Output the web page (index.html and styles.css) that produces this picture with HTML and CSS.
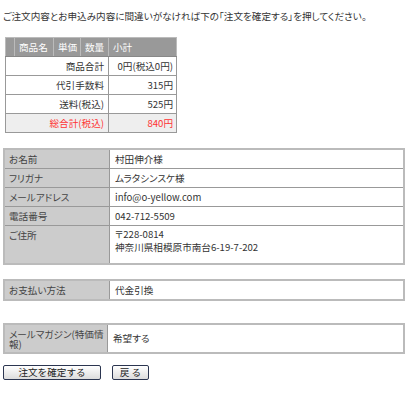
FILE: index.html
```html
<!DOCTYPE html>
<html lang="ja">
<head>
    <meta charset="UTF-8">
    <title>注文内容の確認</title>
    <link rel="stylesheet" href="styles.css">
</head>
<body>
    <div class="confirm-page">
        <p class="lead">ご注文内容とお申込み内容に間違いがなければ下の「注文を確定する」を押してください。</p>

        <table class="cart-table">
            <tr class="cart-head">
                <th class="col-mark"></th>
                <th class="col-name">商品名</th>
                <th class="col-price">単価</th>
                <th class="col-qty">数量</th>
                <th class="col-sub">小計</th>
            </tr>
            <tr>
                <td colspan="4" class="sum-label">商品合計</td>
                <td class="sum-value">0円(税込0円)</td>
            </tr>
            <tr>
                <td colspan="4" class="sum-label">代引手数料</td>
                <td class="sum-value">315円</td>
            </tr>
            <tr>
                <td colspan="4" class="sum-label">送料(税込)</td>
                <td class="sum-value">525円</td>
            </tr>
            <tr class="grand-total">
                <td colspan="4" class="sum-label">総合計(税込)</td>
                <td class="sum-value">840円</td>
            </tr>
        </table>

        <table class="info-table customer">
            <tr>
                <th>お名前</th>
                <td>村田伸介様</td>
            </tr>
            <tr>
                <th>フリガナ</th>
                <td>ムラタシンスケ様</td>
            </tr>
            <tr>
                <th>メールアドレス</th>
                <td>info@o-yellow.com</td>
            </tr>
            <tr>
                <th>電話番号</th>
                <td>042-712-5509</td>
            </tr>
            <tr class="address-row">
                <th>ご住所</th>
                <td>〒228-0814<br>神奈川県相模原市南台6-19-7-202</td>
            </tr>
        </table>

        <table class="info-table payment">
            <tr>
                <th>お支払い方法</th>
                <td>代金引換</td>
            </tr>
        </table>

        <table class="info-table magazine">
            <tr>
                <th class="two-line">メールマガジン(特価情報)</th>
                <td>希望する</td>
            </tr>
        </table>

        <div class="actions">
            <button type="button" class="btn btn-confirm">注文を確定する</button>
            <button type="button" class="btn btn-back">戻 る</button>
        </div>
    </div>
</body>
</html>
```

FILE: styles.css
```css
body {
    margin: 0;
    padding: 0;
    background: #fff;
    color: #333;
    font-family: "Noto Sans CJK JP", "Noto Sans", sans-serif;
    font-size: 9.6px;
    font-feature-settings: "palt";
}
.confirm-page {
    width: 418px;
    padding: 10px 0 0 3px;
    box-sizing: border-box;
}
.lead {
    margin: 0;
    line-height: 12px;
}

/* cart summary */
.cart-table {
    margin: 15px 0 0 2px;
    width: 170px;
    border-collapse: collapse;
    border: 1px solid #888;
    table-layout: fixed;
}
.cart-table th,
.cart-table td {
    box-sizing: border-box;
    padding: 3px 4px;
    line-height: 12px;
    border: 1px solid #999;
    white-space: nowrap;
    overflow: hidden;
}
.cart-head th {
    background-color: #999;
    color: #fff;
    font-weight: normal;
    text-align: left;
    border-color: #bbb #bbb #888 #bbb;
}
.col-mark { width: 8px; padding: 0; }
.col-name { width: 39px; }
.col-price { width: 27px; }
.col-qty { width: 28px; }
.col-sub { width: 68px; }
.cart-table .sum-label {
    text-align: right;
}
.cart-table .sum-value {
    text-align: right;
    padding: 3px 3px 3px 2px;
}
.grand-total td {
    background-color: #eee;
    color: #f33;
}

/* customer info */
.info-table {
    width: 402px;
    border-collapse: collapse;
    border: 2px solid #bbb;
}
.info-table th,
.info-table td {
    padding: 3px 4px;
    line-height: 12px;
    border: 1px solid #999;
    text-align: left;
    font-weight: normal;
    vertical-align: top;
}
.info-table th {
    width: 96px;
    background-color: #ccc;
    color: #444;
}
.info-table td {
    padding-left: 5px;
}
.customer {
    margin-top: 15px;
}
.address-row th,
.address-row td {
    height: 38px;
    box-sizing: border-box;
}
.address-row td {
    line-height: 13px;
    padding-top: 2px;
}
.payment {
    margin-top: 14px;
}
.payment th,
.payment td {
    vertical-align: middle;
}
.magazine {
    margin-top: 22px;
}
.magazine th,
.magazine td {
    vertical-align: middle;
}
.magazine th.two-line {
    line-height: 10px;
    padding: 4px 2px 3px 4px;
}

/* buttons */
.actions {
    display: flex;
    gap: 11px;
    margin-top: 11px;
}
.btn {
    height: 15px;
    padding: 0;
    border: 1px solid #2b3550;
    border-radius: 2px;
    background: linear-gradient(#ffffff, #dcdcdc);
    font-family: "Noto Sans CJK JP", "Noto Sans", sans-serif;
    font-size: 9.6px;
    line-height: 12px;
    color: #222;
}
.btn-confirm {
    width: 98px;
}
.btn-back {
    width: 37px;
}
```
